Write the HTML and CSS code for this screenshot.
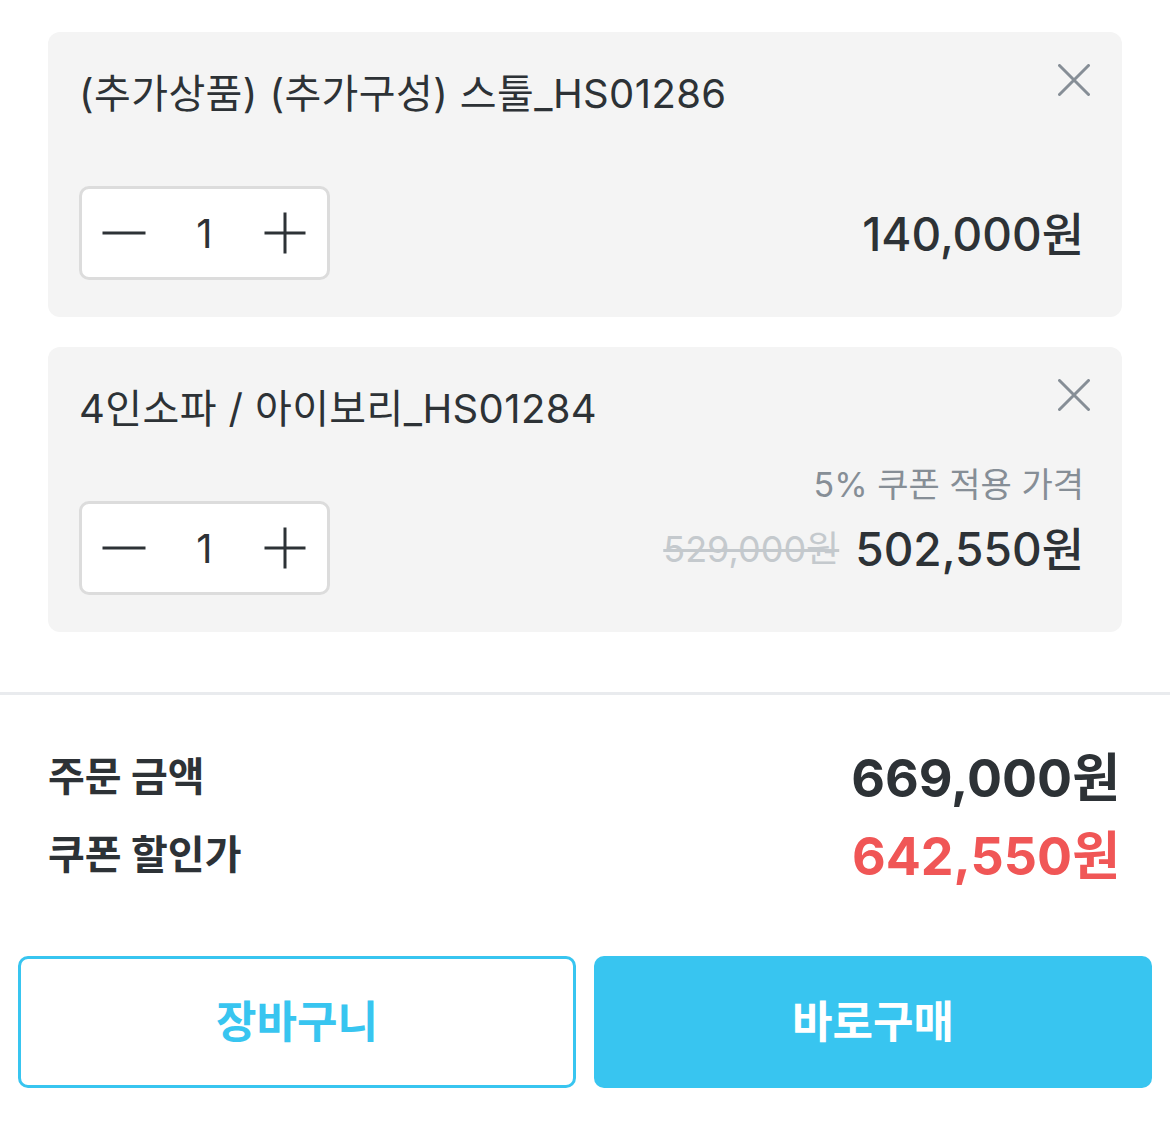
FILE: index.html
```html
<!DOCTYPE html>
<html lang="ko">
<head>
  <meta charset="UTF-8">
  <meta name="viewport" content="width=device-width, initial-scale=1.0">
  <title>주문 옵션</title>
  <link rel="stylesheet" href="styles.css">
</head>
<body>
  <div class="sheet">
    <div class="option-list">
      <div class="option-card">
        <div class="option-head">
          <span class="option-name">(추가상품) (추가구성) 스툴_HS01286</span>
          <button class="remove-btn" aria-label="삭제">
            <svg width="32" height="32" viewBox="0 0 32 32"><path d="M1.5 1.5 L30.5 30.5 M30.5 1.5 L1.5 30.5" stroke="#868e96" stroke-width="3" fill="none" stroke-linecap="round"/></svg>
          </button>
        </div>
        <div class="option-row">
          <div class="qty-box">
            <button class="qty-btn" aria-label="빼기">
              <svg width="44" height="44" viewBox="0 0 44 44"><path d="M0.5 22 H43.5" stroke="#2d3236" stroke-width="3"/></svg>
            </button>
            <span class="qty-count">1</span>
            <button class="qty-btn" aria-label="더하기">
              <svg width="42" height="42" viewBox="0 0 42 42"><path d="M0.5 21 H41.5 M21 0.5 V41.5" stroke="#2d3236" stroke-width="3"/></svg>
            </button>
          </div>
          <div class="price-block">
            <div class="price-line"><span class="price">140,000원</span></div>
          </div>
        </div>
      </div>

      <div class="option-card">
        <div class="option-head">
          <span class="option-name">4인소파 / 아이보리_HS01284</span>
          <button class="remove-btn" aria-label="삭제">
            <svg width="32" height="32" viewBox="0 0 32 32"><path d="M1.5 1.5 L30.5 30.5 M30.5 1.5 L1.5 30.5" stroke="#868e96" stroke-width="3" fill="none" stroke-linecap="round"/></svg>
          </button>
        </div>
        <div class="option-row">
          <div class="qty-box">
            <button class="qty-btn" aria-label="빼기">
              <svg width="44" height="44" viewBox="0 0 44 44"><path d="M0.5 22 H43.5" stroke="#2d3236" stroke-width="3"/></svg>
            </button>
            <span class="qty-count">1</span>
            <button class="qty-btn" aria-label="더하기">
              <svg width="42" height="42" viewBox="0 0 42 42"><path d="M0.5 21 H41.5 M21 0.5 V41.5" stroke="#2d3236" stroke-width="3"/></svg>
            </button>
          </div>
          <div class="price-block">
            <div class="coupon-label">5% 쿠폰 적용 가격</div>
            <div class="price-line">
              <span class="price-old">529,000원</span>
              <span class="price">502,550원</span>
            </div>
          </div>
        </div>
      </div>
    </div>

    <div class="summary">
      <div class="summary-row">
        <span class="summary-label">주문 금액</span>
        <span class="summary-value">669,000원</span>
      </div>
      <div class="summary-row">
        <span class="summary-label">쿠폰 할인가</span>
        <span class="summary-value discount">642,550원</span>
      </div>
    </div>

    <div class="actions">
      <button class="btn btn-outline">장바구니</button>
      <button class="btn btn-fill">바로구매</button>
    </div>
  </div>
</body>
</html>
```

FILE: styles.css
```css
body {
  margin: 0;
  background: #fff;
  color: #2d3236;
  font-family: "Inter", "Noto Sans CJK KR", sans-serif;
}

button {
  font-family: inherit;
  border: none;
  background: none;
  padding: 0;
  cursor: pointer;
}

/* Option cards */
.option-list {
  display: flex;
  flex-direction: column;
  gap: 30px;
  padding: 32px 48px 60px;
}

.option-card {
  background: #f4f4f4;
  border-radius: 12px;
  padding: 32px 38px 37px 31px;
}

.option-head {
  display: flex;
  align-items: flex-start;
  justify-content: space-between;
  margin-right: -6px;
}

.option-name {
  font-size: 40px;
  line-height: 60px;
  letter-spacing: 0.4px;
}

.remove-btn {
  width: 32px;
  height: 32px;
  display: flex;
}

.option-row {
  display: flex;
  justify-content: space-between;
  align-items: flex-end;
  height: 94px;
  margin-top: 62px;
}

.qty-box {
  display: flex;
  align-items: center;
  width: 251px;
  height: 94px;
  box-sizing: border-box;
  background: #fff;
  border: 3px solid #dcdcdc;
  border-radius: 10px;
}

.qty-btn {
  width: 84px;
  height: 88px;
  display: flex;
  align-items: center;
  justify-content: center;
}

.qty-count {
  flex: 1;
  text-align: center;
  font-size: 40px;
}

.price-block {
  display: flex;
  flex-direction: column;
  align-items: flex-end;
}

.coupon-label {
  font-size: 34px;
  line-height: 40px;
  color: #868e96;
  margin-bottom: -4px;
}

.price-line {
  display: flex;
  align-items: center;
  gap: 16px;
  height: 94px;
  padding-bottom: 4px;
  box-sizing: border-box;
}

.price {
  font-size: 46px;
  font-weight: 500;
}

.price-old {
  font-size: 36px;
  color: #c4c9cd;
  text-decoration: line-through;
}

/* Summary */
.summary {
  border-top: 3px solid #e9ebee;
  padding: 40px 50px 0 48px;
}

.summary-row {
  display: flex;
  justify-content: space-between;
  align-items: center;
  height: 78px;
}

.summary-label {
  font-size: 40px;
  font-weight: 700;
}

.summary-value {
  font-size: 52px;
  font-weight: 700;
}

.summary-value.discount {
  color: #f05656;
}

/* Bottom buttons */
.actions {
  display: grid;
  grid-template-columns: 1fr 1fr;
  gap: 18px;
  padding: 65px 18px 0;
}

.btn {
  height: 132px;
  border-radius: 10px;
  font-size: 44px;
  font-weight: 700;
  padding-bottom: 6px;
  box-sizing: border-box;
}

.btn-outline {
  border: 3px solid #38c5f0;
  color: #38c5f0;
  background: #fff;
}

.btn-fill {
  background: #38c5f0;
  color: #fff;
}
```
